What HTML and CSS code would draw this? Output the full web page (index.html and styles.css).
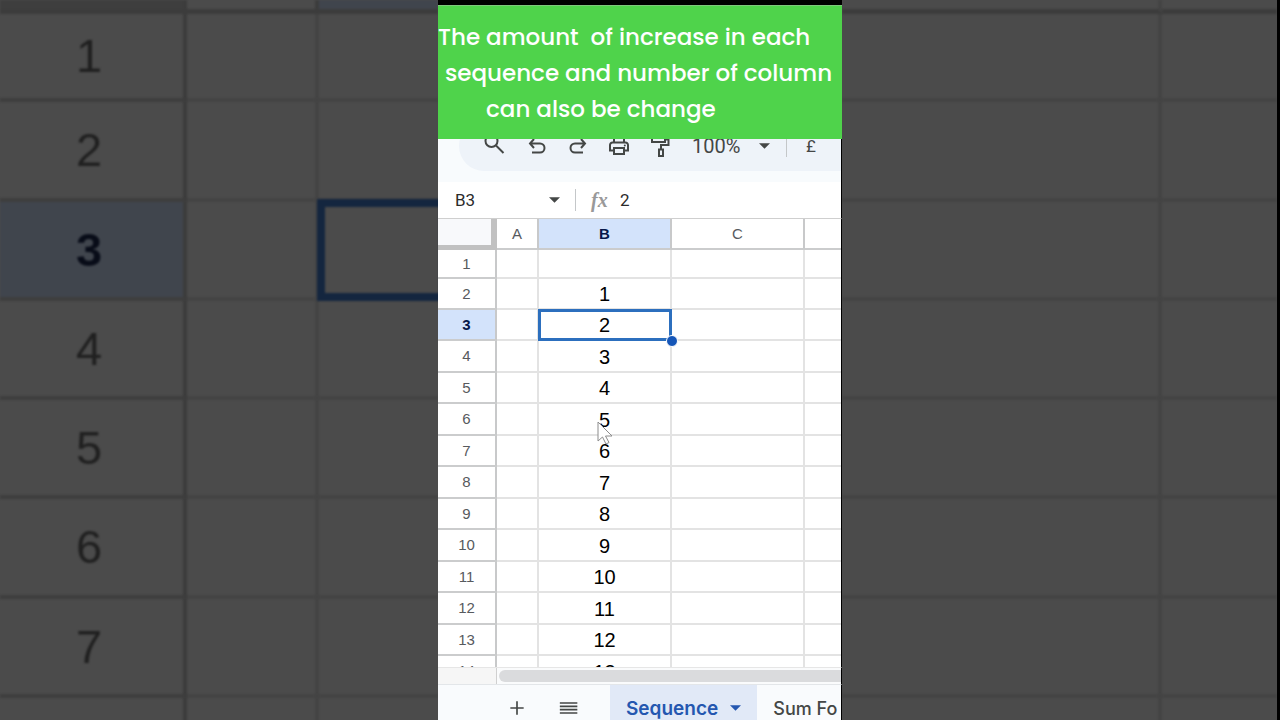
FILE: index.html
```html
<!DOCTYPE html>
<html lang="en">
<head>
    <meta charset="UTF-8">
    <meta name="viewport" content="width=device-width, initial-scale=1.0">
    <title>Sequence</title>
    <link rel="stylesheet" href="styles.css">
</head>
<body>
    <div class="stage">
        <div class="backdrop" aria-hidden="true">
            <table class="back-table">
                <colgroup><col class="back-num"><col class="back-a"><col></colgroup>
                <tr class="back-head"><th class="back-corner"></th><th></th><th class="back-on"></th></tr>
                <tr class="first"><th>1</th><td></td><td></td></tr>
                <tr><th>2</th><td></td><td></td></tr>
                <tr><th class="back-on">3</th><td></td><td class="back-selected"></td></tr>
                <tr><th>4</th><td></td><td></td></tr>
                <tr><th>5</th><td></td><td></td></tr>
                <tr><th>6</th><td></td><td></td></tr>
                <tr><th>7</th><td></td><td></td></tr>
                <tr><th></th><td></td><td></td></tr>
            </table>
        </div>

        <main class="phone">
            <div class="banner">
                <p>The amount  of increase in each</p>
                <p class="line-two">sequence and number of column</p>
                <p class="line-three">can also be change</p>
            </div>

            <div class="toolbar">
                <div class="pill">
                    <button class="tool" aria-label="Search">
                        <svg viewBox="0 0 24 24"><circle cx="7.5" cy="7" r="6"/><path d="M12 11.5l7.5 7.5"/></svg>
                    </button>
                    <button class="tool" aria-label="Undo">
                        <svg viewBox="0 0 24 24"><path d="M9 5L5 9.5 9 14M5.500 9.500H15a4.500 4.500 0 0 1 0 9H7"/></svg>
                    </button>
                    <button class="tool" aria-label="Redo">
                        <svg viewBox="0 0 24 24"><path d="M15 5l4 4.500-4 4.500M18.500 9.500H9a4.500 4.500 0 0 0 0 9h8"/></svg>
                    </button>
                    <button class="tool" aria-label="Print">
                        <svg viewBox="0 0 24 24"><path d="M7 8V4h10v4M7 16.500H3V11a2.500 2.500 0 0 1 2.500-2.500h13A2.500 2.500 0 0 1 21 11v5.500h-4M7 14h10v6H7z"/><circle class="dot" cx="17.800" cy="11.500" r="1"/></svg>
                    </button>
                    <button class="tool" aria-label="Paint format">
                        <svg viewBox="0 0 24 24"><path d="M4 3h13v5H4zM17 5.500h3.500v5.500H13v4M11 15.500h4V22h-4z"/></svg>
                    </button>
                    <label class="zoom">
                        <select aria-label="Zoom"><option>100%</option></select>
                        <svg class="caret" viewBox="0 0 12 6"><path d="M0 0h12L6 6z"/></svg>
                    </label>
                    <span class="divider"></span>
                    <button class="tool pound" aria-label="Format as currency">£</button>
                </div>
            </div>

            <div class="formula-bar">
                <input class="name-box" type="text" value="B3" aria-label="Name box">
                <button class="plain" aria-label="Named ranges"><svg class="caret" viewBox="0 0 12 6"><path d="M0 0h12L6 6z"/></svg></button>
                <span class="divider"></span>
                <label class="fx" for="formula">fx</label>
                <input class="formula" id="formula" type="text" value="2">
            </div>

            <div class="sheet">
                <table class="grid">
                    <colgroup><col class="num"><col class="a"><col class="b"><col class="b"><col></colgroup>
                    <tr class="head"><th class="corner"></th><th>A</th><th class="on">B</th><th>C</th><th></th></tr>
                    <tr class="first"><th>1</th><td></td><td></td><td></td><td></td></tr>
                    <tr><th>2</th><td></td><td>1</td><td></td><td></td></tr>
                    <tr><th class="on">3</th><td></td><td class="selected">2<span class="handle"></span></td><td></td><td></td></tr>
                    <tr><th>4</th><td></td><td>3</td><td></td><td></td></tr>
                    <tr><th>5</th><td></td><td>4</td><td></td><td></td></tr>
                    <tr><th>6</th><td></td><td class="pointed">5<svg class="cursor" viewBox="0 0 16 24"><path d="M1 1v19l4.500-4 3.500 7 3-1.500-3.500-6.500H15z"/></svg></td><td></td><td></td></tr>
                    <tr><th>7</th><td></td><td>6</td><td></td><td></td></tr>
                    <tr><th>8</th><td></td><td>7</td><td></td><td></td></tr>
                    <tr><th>9</th><td></td><td>8</td><td></td><td></td></tr>
                    <tr><th>10</th><td></td><td>9</td><td></td><td></td></tr>
                    <tr><th>11</th><td></td><td>10</td><td></td><td></td></tr>
                    <tr><th>12</th><td></td><td>11</td><td></td><td></td></tr>
                    <tr><th>13</th><td></td><td>12</td><td></td><td></td></tr>
                    <tr><th>14</th><td></td><td>13</td><td></td><td></td></tr>
                </table>
            </div>

            <div class="scroll">
                <span class="scroll-corner"></span>
                <span class="thumb"></span>
            </div>

            <nav class="tabs">
                <button class="plain add" aria-label="Add sheet"><svg viewBox="0 0 24 24"><path d="M12 4v16M4 12h16"/></svg></button>
                <button class="plain all" aria-label="All sheets"><svg viewBox="0 0 24 24"><path d="M1 6h21M1 10h21M1 14h21M1 18h21"/></svg></button>
                <button class="tab active">Sequence <svg class="caret" viewBox="0 0 12 6"><path d="M0 0h12L6 6z"/></svg></button>
                <button class="tab">Sum Fo</button>
            </nav>
        </main>

        <div class="backdrop backdrop-right" aria-hidden="true">
            <table class="back-table">
                <colgroup><col class="back-c"><col></colgroup>
                <tr class="back-head"><td></td><td></td></tr>
                <tr class="first"><td></td><td></td></tr>
                <tr><td></td><td></td></tr>
                <tr><td></td><td></td></tr>
                <tr><td></td><td></td></tr>
                <tr><td></td><td></td></tr>
                <tr><td></td><td></td></tr>
                <tr><td></td><td></td></tr>
                <tr><td></td><td></td></tr>
            </table>
        </div>
    </div>
</body>
</html>
```

FILE: styles.css
```css
* { box-sizing: border-box; }
body { margin: 0; background: #000; font-family: Roboto, "Liberation Sans", sans-serif; }
button, input, select { font: inherit; color: inherit; background: none; border: none; padding: 0; margin: 0; border-radius: 0; }
button { cursor: pointer; }
table { width: 100%; table-layout: fixed; border-collapse: separate; border-spacing: 0; font-family: "Liberation Sans", sans-serif; }
th, td { padding: 0; text-align: center; }

.stage { display: grid; grid-template-columns: 1fr 404px 1fr; height: 100vh; overflow: hidden; }

/* dimmed, enlarged sheet on both sides */
.backdrop { background: #4b4b4b; overflow: hidden; min-width: 0; }
.backdrop-right { border-right: 3px solid #000; }
.back-table { color: #202020; font-size: 47px; filter: blur(1px); }
.back-num { width: 187px; }
.back-a { width: 132px; }
.back-c { width: 320px; }
.back-table tr { height: 99px; }
.back-table tr:nth-child(4n+3) { height: 100px; }
.back-table tr.first { height: 88px; }
.back-table tr.back-head { height: 14px; }
.back-table td { border-right: 4px solid #444; border-bottom: 4px solid #444; }
.back-table th { font-weight: normal; border-right: 4px solid #3c3c3c; border-bottom: 4px solid #3e3e3e; padding-right: 5px; line-height: 48px; }
.back-table .back-head th, .back-table .back-head td { border-bottom: 5px solid #3c3c3c; }
.back-table .back-corner { background: #3e3e3e; }
.back-table .back-on { background: #40454d; color: #080c18; font-weight: bold; }
.back-table tr > :last-child { border-right: none; }
.back-selected { position: relative; }
.back-selected::after { content: ""; position: absolute; top: -3px; right: -9px; bottom: -4px; left: -2px; border: 8px solid #14263f; }

.phone { display: flex; flex-direction: column; min-width: 0; height: 100vh; overflow: hidden; background: #fff; border-top: 5px solid #000; }
.phone > :not(.banner) { border-right: 1px solid #000; }

.banner { flex: none; height: 134px; padding-top: 13px; background: #4fd34b; border-top: 1px solid #7fc87c; color: #fff; overflow: hidden; font-family: Poppins, Inter, sans-serif; font-size: 23px; font-weight: 500; line-height: 36px; }
.banner p { margin: 0; white-space: pre; }
.banner .line-two { padding-left: 7px; }
.banner .line-three { padding-left: 48px; }

/* the banner covers the upper part of the toolbar */
.toolbar { flex: none; display: flex; align-items: flex-end; height: 43px; padding: 0 0 11px 21px; background: #f8fbfd; overflow: hidden; }
.pill { flex: 1; display: flex; align-items: center; height: 50px; padding-left: 16px; background: #eef3f9; border-radius: 25px 0 0 25px; color: #444746; }
.tool { flex: none; width: 41px; height: 32px; display: flex; align-items: center; justify-content: center; }
.tool svg, .tabs .plain svg { width: 24px; height: 24px; fill: none; stroke: currentColor; stroke-width: 2; }
.tool .dot { fill: currentColor; stroke: none; }
.pound { width: 48px; font-size: 17px; }
.zoom { flex: none; display: flex; align-items: center; gap: 15px; padding-left: 12px; font-size: 20px; }
.zoom select { appearance: none; width: 52px; }
.caret { width: 11px; height: 6px; fill: currentColor; }
.divider { flex: none; width: 1px; height: 22px; background: #c4c7c9; }
.zoom + .divider { margin-left: 16px; }

.formula-bar { flex: none; display: flex; align-items: center; height: 36px; padding-left: 17px; color: #2b2b2b; font-size: 17px; }
.name-box { width: 80px; }
.plain { display: flex; align-items: center; justify-content: center; width: 38px; height: 28px; color: #444746; }
.formula-bar .divider { margin-left: 2px; }
.fx { width: 44px; padding-left: 15px; color: #999; font: italic bold 20px "Liberation Serif", serif; }
.formula { flex: 1; min-width: 0; }

.sheet { flex: 1; min-height: 0; overflow: hidden; border-top: 1px solid #cfcfcf; }
.num { width: 59px; }
.a { width: 42px; }
.b { width: 133px; }
.grid { font-size: 20px; line-height: 22px; color: #000; }
.grid tr { height: 31px; }
.grid tr:nth-child(2n+5) { height: 32px; }
.grid tr.first { height: 29px; }
.grid td { padding-top: 1px; border-right: 2px solid #e3e3e3; border-bottom: 2px solid #e3e3e3; }
.grid th { font-size: 15px; line-height: 18px; font-weight: normal; color: #575a5e; border-right: 2px solid #c8c9ca; border-bottom: 2px solid #cbcccd; }
.grid .on { background: #d3e3fb; color: #06184a; font-weight: bold; }
.grid .corner { background: #f8f9fb; border-right: 6px solid #c1c1c1; border-bottom: 5px solid #c1c1c1; }
.grid tr > :last-child { border-right: none; }
.grid .selected, .grid .pointed { position: relative; }
.selected::after { content: ""; position: absolute; top: -1px; right: -2px; bottom: -2px; left: -1px; border: 3px solid #2c6fbe; }
.handle { position: absolute; z-index: 1; right: -8px; bottom: -8px; width: 12px; height: 12px; border-radius: 50%; background: #1556b8; border: 1px solid #fff; }
.cursor { position: absolute; z-index: 1; left: 58px; top: 17px; width: 16px; height: 24px; fill: #fff; stroke: #8c8c8c; stroke-width: 1; }

.scroll { flex: none; display: flex; align-items: center; height: 17px; border-top: 1px solid #e6e6e6; background: #fafbfc; }
.scroll-corner { width: 59px; height: 16px; background: #f6f6f6; border-right: 1px solid #d0d0d0; }
.thumb { flex: 1; height: 12px; margin-left: 2px; background: #dadbdd; border-radius: 6px 0 0 6px; }

.tabs { flex: none; display: flex; height: 36px; padding-left: 53px; background: #f9fbfd; border-top: 1px solid #e3e6e9; overflow: hidden; color: #444746; }
.tabs .plain { flex: none; width: 52px; height: 46px; }
.tabs .plain svg { width: 20px; height: 20px; }
.all { margin-right: 15px; }
.tab { flex: none; display: flex; align-items: center; gap: 12px; height: 46px; padding: 0 16px; font-family: Inter, sans-serif; font-size: 18px; font-weight: 500; white-space: nowrap; }
.tab.active { background: #e1e9f7; color: #2457b0; font-size: 19px; font-weight: 600; }
```
